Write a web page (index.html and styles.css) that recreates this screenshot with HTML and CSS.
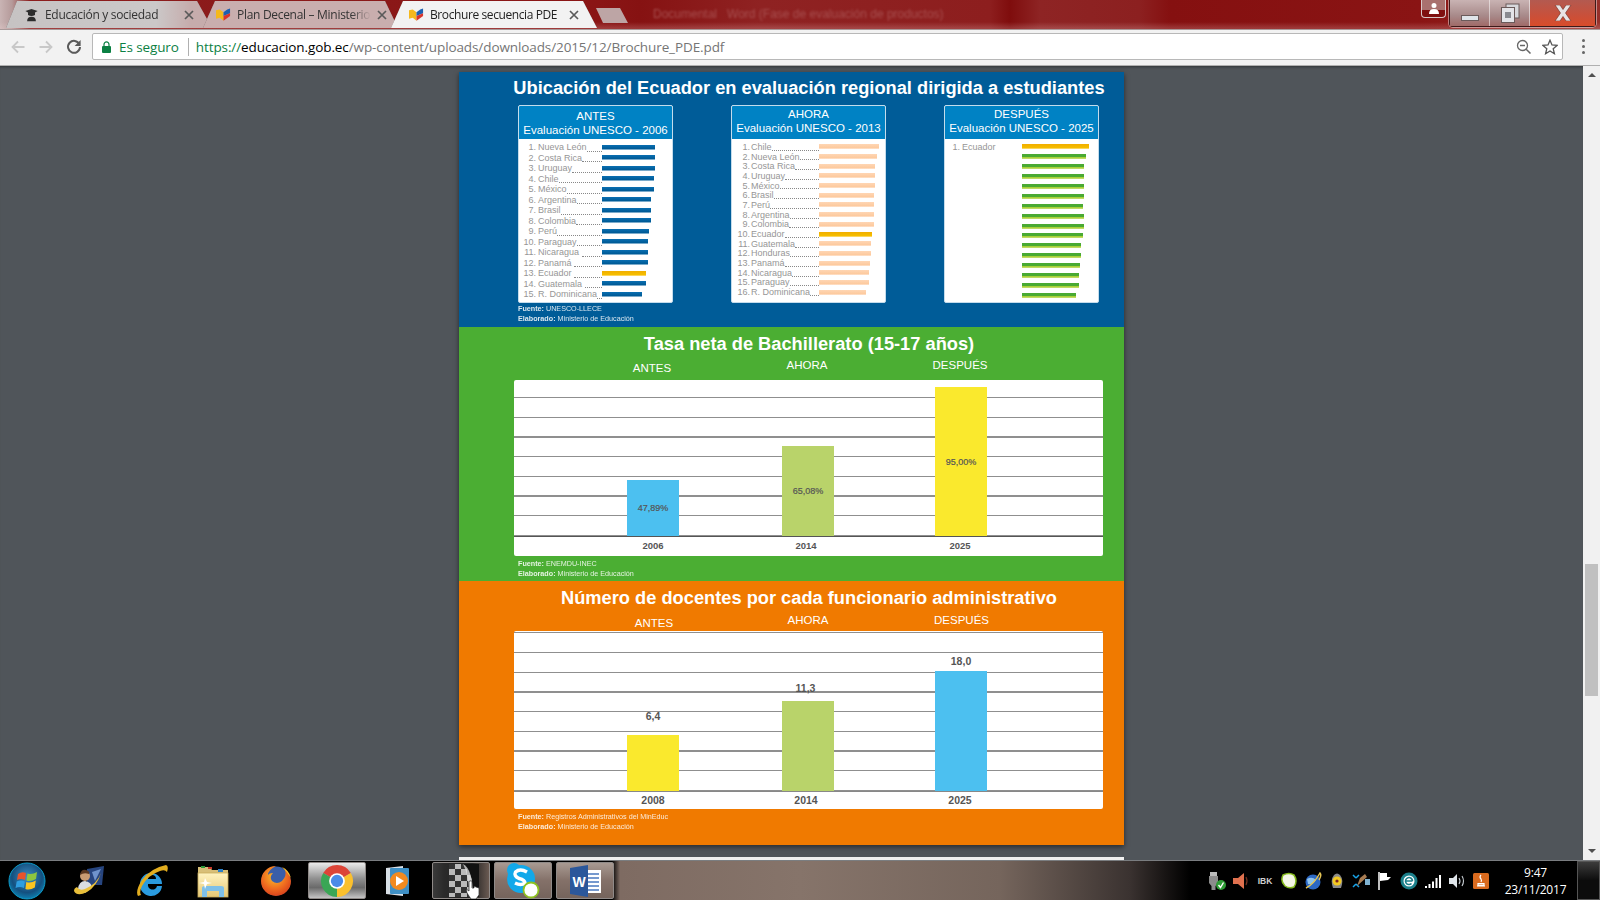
FILE: index.html
```html
<!DOCTYPE html>
<html lang="es">
<head>
    <meta charset="UTF-8">
    <title>Brochure secuencia PDE</title>
    <link rel="stylesheet" href="styles.css">
</head>
<body>
    <svg class="defs" width="0" height="0">
        <defs>
            <symbol id="book" viewBox="0 0 16 14">
                <path d="M0 2 L4 1 L8 4 L8 13 L4 10 L0 11 Z" fill="#f5b81c"/>
                <path d="M8 4 L12 1 L15 0 L15 5 L8 8 Z" fill="#1d5fb0"/>
                <path d="M8 8 L15 5 L15 8 L8 13 Z" fill="#d8342c"/>
            </symbol>
            <symbol id="close" viewBox="0 0 10 10">
                <path d="M1 1 L9 9 M9 1 L1 9" stroke="#5a5a5a" stroke-width="1.7" fill="none"/>
            </symbol>
            <radialGradient id="orb" cx="50%" cy="40%" r="60%">
                <stop offset="0" stop-color="#3f8fc4"/>
                <stop offset="0.7" stop-color="#14507f"/>
                <stop offset="1" stop-color="#0f7fb0"/>
            </radialGradient>
            <linearGradient id="folder" x1="0" y1="0" x2="0" y2="1">
                <stop offset="0" stop-color="#fff3c0"/>
                <stop offset="1" stop-color="#e6c875"/>
            </linearGradient>
            <radialGradient id="fox" cx="45%" cy="35%" r="70%">
                <stop offset="0" stop-color="#fbbf2a"/>
                <stop offset="0.6" stop-color="#ef6a1f"/>
                <stop offset="1" stop-color="#d43c1b"/>
            </radialGradient>
            <pattern id="checks" width="12" height="12" patternUnits="userSpaceOnUse">
                <rect width="12" height="12" fill="#333"/>
                <rect width="6" height="6" fill="#bbb"/>
                <rect x="6" y="6" width="6" height="6" fill="#bbb"/>
            </pattern>
        </defs>
    </svg>

    <div class="window">
        <header class="titlebar">
            <div class="tabs">
                <div class="tab tab-first">
                    <svg class="tab-icon" viewBox="0 0 14 16"><path d="M0 3.5 L7 1 L14 3.5 L11 5 L11 8 Q7 10 3 8 L3 5 Z M2 15 Q2 10 7 10 Q12 10 12 15 Z" fill="#2c2c2c"/></svg>
                    <span class="tab-title">Educación y sociedad</span>
                    <svg class="tab-close"><use href="#close"/></svg>
                </div>
                <div class="tab tab-second">
                    <svg class="tab-icon"><use href="#book"/></svg>
                    <span class="tab-title tab-fade">Plan Decenal – Ministerio</span>
                    <svg class="tab-close"><use href="#close"/></svg>
                </div>
                <div class="tab tab-active">
                    <svg class="tab-icon"><use href="#book"/></svg>
                    <span class="tab-title">Brochure secuencia PDE</span>
                    <svg class="tab-close"><use href="#close"/></svg>
                </div>
                <div class="tab-new"></div>
            </div>
            <div class="blurred-title">Documental &nbsp; Word (Fase de evaluación de productos)</div>
            <div class="profile">
                <svg viewBox="0 0 10 12" width="10" height="12"><path d="M5 0 A2.4 2.4 0 1 1 5 5 A2.4 2.4 0 1 1 5 0 Z M0 11 Q0 6 5 6 Q10 6 10 11 Z" fill="#fff"/></svg>
            </div>
            <div class="win-controls">
                <div class="win-btn"><span class="win-min"></span></div>
                <div class="win-btn">
                    <svg viewBox="0 0 20 20" width="20" height="20">
                        <rect x="6" y="1" width="13" height="14" fill="#d8d8dc" stroke="#6a5a5a"/>
                        <rect x="1.5" y="4.5" width="13" height="15" fill="#e4e4e8" stroke="#6a5a5a"/>
                        <rect x="5" y="9" width="6" height="6" fill="#8a8a90"/>
                    </svg>
                </div>
                <div class="win-btn win-close">
                    <svg viewBox="0 0 18 16" width="18" height="16"><path d="M1 0 H6 L9 4.5 L12 0 H17 L11.5 8 L17 16 H12 L9 11.5 L6 16 H1 L6.5 8 Z" fill="#e8e4e4" stroke="#6a2a20" stroke-width=".6"/></svg>
                </div>
            </div>
        </header>

        <div class="toolbar">
            <div class="nav-btn"><svg viewBox="0 0 14 14" width="14" height="14"><path d="M7 1.5 L1.5 7 L7 12.5 M1.5 7 H13.5" class="nav-off"/></svg></div>
            <div class="nav-btn"><svg viewBox="0 0 14 14" width="14" height="14"><path d="M7 1.5 L12.5 7 L7 12.5 M12.5 7 H.5" class="nav-off"/></svg></div>
            <div class="nav-btn"><svg viewBox="0 0 16 16" width="16" height="16"><path d="M13.4 5.2 A6 6 0 1 0 14 8" fill="none" stroke="#5a5a5a" stroke-width="2"/><path d="M14.6 1 V7 H8.6 Z" fill="#5a5a5a"/></svg></div>
            <div class="omnibox">
                <svg class="lock" viewBox="0 0 9 12" width="9" height="12"><path d="M2 5 V3.4 A2.5 2.5 0 0 1 7 3.4 V5" fill="none" stroke="#0b8043" stroke-width="1.2"/><rect y="5" width="9" height="7" rx="1" fill="#0b8043"/></svg>
                <span class="secure">Es seguro</span>
                <span class="omni-sep"></span>
                <span class="url"><span class="url-scheme">https://</span><span class="url-host">educacion.gob.ec</span>/wp-content/uploads/downloads/2015/12/Brochure_PDE.pdf</span>
                <svg class="omni-icon" viewBox="0 0 16 16" width="16" height="16"><circle cx="6.5" cy="6.5" r="5" fill="none" stroke="#666" stroke-width="1.3"/><path d="M4 6.5 H9 M10.2 10.2 L14.5 14.5" stroke="#666" stroke-width="1.5"/></svg>
                <svg class="omni-icon" viewBox="0 0 16 16" width="16" height="16"><path d="M8 1.2 L10 6 L15 6.4 L11.2 9.7 L12.4 14.7 L8 12 L3.6 14.7 L4.8 9.7 L1 6.4 L6 6 Z" fill="none" stroke="#555" stroke-width="1.3"/></svg>
            </div>
            <div class="menu-dots"><span></span><span></span><span></span></div>
        </div>

        <main class="viewer">
            <div class="pages">
                <div class="doc">
                    <section class="band band-blue">
                        <h2 class="band-title">Ubicación del Ecuador en evaluación regional dirigida a estudiantes</h2>
                        <div class="rank-cards">
                            <div class="rank-card rank-low">
                                <div class="rank-head rank-head-tall">ANTES<br>Evaluación UNESCO - 2006</div>
                                <div class="rank-rows rows-a">
                                    <div class="rank-row"><span class="num">1.</span><span class="name">Nueva León</span><i class="dots"></i><span class="bar-box"><b class="bar bar-blue" style="width:53px"></b></span></div>
                                    <div class="rank-row"><span class="num">2.</span><span class="name">Costa Rica</span><i class="dots"></i><span class="bar-box"><b class="bar bar-blue" style="width:53px"></b></span></div>
                                    <div class="rank-row"><span class="num">3.</span><span class="name">Uruguay</span><i class="dots"></i><span class="bar-box"><b class="bar bar-blue" style="width:53px"></b></span></div>
                                    <div class="rank-row"><span class="num">4.</span><span class="name">Chile</span><i class="dots"></i><span class="bar-box"><b class="bar bar-blue" style="width:52px"></b></span></div>
                                    <div class="rank-row"><span class="num">5.</span><span class="name">México</span><i class="dots"></i><span class="bar-box"><b class="bar bar-blue" style="width:52px"></b></span></div>
                                    <div class="rank-row"><span class="num">6.</span><span class="name">Argentina</span><i class="dots"></i><span class="bar-box"><b class="bar bar-blue" style="width:49px"></b></span></div>
                                    <div class="rank-row"><span class="num">7.</span><span class="name">Brasil</span><i class="dots"></i><span class="bar-box"><b class="bar bar-blue" style="width:49px"></b></span></div>
                                    <div class="rank-row"><span class="num">8.</span><span class="name">Colombia</span><i class="dots"></i><span class="bar-box"><b class="bar bar-blue" style="width:49px"></b></span></div>
                                    <div class="rank-row"><span class="num">9.</span><span class="name">Perú</span><i class="dots"></i><span class="bar-box"><b class="bar bar-blue" style="width:47px"></b></span></div>
                                    <div class="rank-row"><span class="num">10.</span><span class="name">Paraguay</span><i class="dots"></i><span class="bar-box"><b class="bar bar-blue" style="width:46px"></b></span></div>
                                    <div class="rank-row"><span class="num">11.</span><span class="name">Nicaragua&nbsp;</span><i class="dots"></i><span class="bar-box"><b class="bar bar-blue" style="width:46px"></b></span></div>
                                    <div class="rank-row"><span class="num">12.</span><span class="name">Panamá&nbsp;</span><i class="dots"></i><span class="bar-box"><b class="bar bar-blue" style="width:46px"></b></span></div>
                                    <div class="rank-row"><span class="num">13.</span><span class="name">Ecuador&nbsp;</span><i class="dots"></i><span class="bar-box"><b class="bar bar-gold" style="width:44px"></b></span></div>
                                    <div class="rank-row"><span class="num">14.</span><span class="name">Guatemala&nbsp;</span><i class="dots"></i><span class="bar-box"><b class="bar bar-blue" style="width:44px"></b></span></div>
                                    <div class="rank-row"><span class="num">15.</span><span class="name">R. Dominicana</span><i class="dots"></i><span class="bar-box"><b class="bar bar-blue" style="width:40px"></b></span></div>
                                </div>
                            </div>
                            <div class="rank-card rank-mid">
                                <div class="rank-head">AHORA<br>Evaluación UNESCO - 2013</div>
                                <div class="rank-rows rows-b">
                                    <div class="rank-row"><span class="num">1.</span><span class="name">Chile</span><i class="dots"></i><span class="bar-box"><b class="bar bar-peach" style="width:60px"></b></span></div>
                                    <div class="rank-row"><span class="num">2.</span><span class="name">Nueva León</span><i class="dots"></i><span class="bar-box"><b class="bar bar-peach" style="width:58px"></b></span></div>
                                    <div class="rank-row"><span class="num">3.</span><span class="name">Costa Rica</span><i class="dots"></i><span class="bar-box"><b class="bar bar-peach" style="width:56px"></b></span></div>
                                    <div class="rank-row"><span class="num">4.</span><span class="name">Uruguay</span><i class="dots"></i><span class="bar-box"><b class="bar bar-peach" style="width:56px"></b></span></div>
                                    <div class="rank-row"><span class="num">5.</span><span class="name">México</span><i class="dots"></i><span class="bar-box"><b class="bar bar-peach" style="width:56px"></b></span></div>
                                    <div class="rank-row"><span class="num">6.</span><span class="name">Brasil</span><i class="dots"></i><span class="bar-box"><b class="bar bar-peach" style="width:55px"></b></span></div>
                                    <div class="rank-row"><span class="num">7.</span><span class="name">Perú</span><i class="dots"></i><span class="bar-box"><b class="bar bar-peach" style="width:55px"></b></span></div>
                                    <div class="rank-row"><span class="num">8.</span><span class="name">Argentina</span><i class="dots"></i><span class="bar-box"><b class="bar bar-peach" style="width:55px"></b></span></div>
                                    <div class="rank-row"><span class="num">9.</span><span class="name">Colombia</span><i class="dots"></i><span class="bar-box"><b class="bar bar-peach" style="width:55px"></b></span></div>
                                    <div class="rank-row"><span class="num">10.</span><span class="name">Ecuador</span><i class="dots"></i><span class="bar-box"><b class="bar bar-gold" style="width:53px"></b></span></div>
                                    <div class="rank-row"><span class="num">11.</span><span class="name">Guatemala</span><i class="dots"></i><span class="bar-box"><b class="bar bar-peach" style="width:52px"></b></span></div>
                                    <div class="rank-row"><span class="num">12.</span><span class="name">Honduras</span><i class="dots"></i><span class="bar-box"><b class="bar bar-peach" style="width:52px"></b></span></div>
                                    <div class="rank-row"><span class="num">13.</span><span class="name">Panamá</span><i class="dots"></i><span class="bar-box"><b class="bar bar-peach" style="width:51px"></b></span></div>
                                    <div class="rank-row"><span class="num">14.</span><span class="name">Nicaragua</span><i class="dots"></i><span class="bar-box"><b class="bar bar-peach" style="width:50px"></b></span></div>
                                    <div class="rank-row"><span class="num">15.</span><span class="name">Paraguay</span><i class="dots"></i><span class="bar-box"><b class="bar bar-peach" style="width:50px"></b></span></div>
                                    <div class="rank-row"><span class="num">16.</span><span class="name">R. Dominicana</span><i class="dots"></i><span class="bar-box"><b class="bar bar-peach" style="width:47px"></b></span></div>
                                </div>
                            </div>
                            <div class="rank-card rank-high">
                                <div class="rank-head">DESPUÉS<br>Evaluación UNESCO - 2025</div>
                                <div class="rank-rows rows-c">
                                    <div class="rank-row"><span class="num">1.</span><span class="name">Ecuador</span><i class="no-dots"></i><span class="bar-box"><b class="bar bar-gold" style="width:67px"></b></span></div>
                                    <div class="rank-row"><i class="no-dots"></i><span class="bar-box"><b class="bar bar-green" style="width:64px"></b></span></div>
                                    <div class="rank-row"><i class="no-dots"></i><span class="bar-box"><b class="bar bar-green" style="width:62px"></b></span></div>
                                    <div class="rank-row"><i class="no-dots"></i><span class="bar-box"><b class="bar bar-green" style="width:62px"></b></span></div>
                                    <div class="rank-row"><i class="no-dots"></i><span class="bar-box"><b class="bar bar-green" style="width:62px"></b></span></div>
                                    <div class="rank-row"><i class="no-dots"></i><span class="bar-box"><b class="bar bar-green" style="width:62px"></b></span></div>
                                    <div class="rank-row"><i class="no-dots"></i><span class="bar-box"><b class="bar bar-green" style="width:61px"></b></span></div>
                                    <div class="rank-row"><i class="no-dots"></i><span class="bar-box"><b class="bar bar-green" style="width:62px"></b></span></div>
                                    <div class="rank-row"><i class="no-dots"></i><span class="bar-box"><b class="bar bar-green" style="width:62px"></b></span></div>
                                    <div class="rank-row"><i class="no-dots"></i><span class="bar-box"><b class="bar bar-green" style="width:61px"></b></span></div>
                                    <div class="rank-row"><i class="no-dots"></i><span class="bar-box"><b class="bar bar-green" style="width:59px"></b></span></div>
                                    <div class="rank-row"><i class="no-dots"></i><span class="bar-box"><b class="bar bar-green" style="width:59px"></b></span></div>
                                    <div class="rank-row"><i class="no-dots"></i><span class="bar-box"><b class="bar bar-green" style="width:58px"></b></span></div>
                                    <div class="rank-row"><i class="no-dots"></i><span class="bar-box"><b class="bar bar-green" style="width:57px"></b></span></div>
                                    <div class="rank-row"><i class="no-dots"></i><span class="bar-box"><b class="bar bar-green" style="width:57px"></b></span></div>
                                    <div class="rank-row"><i class="no-dots"></i><span class="bar-box"><b class="bar bar-green" style="width:54px"></b></span></div>
                                </div>
                            </div>
                        </div>
                        <div class="notes notes-blue">
                            <p><b>Fuente:</b> UNESCO-LLECE</p>
                            <p><b>Elaborado:</b> Ministerio de Educación</p>
                        </div>
                    </section>

                    <section class="band band-green">
                        <h2 class="band-title">Tasa neta de Bachillerato (15-17 años)</h2>
                        <div class="periods periods-green">
                            <span class="period-low">ANTES</span><span>AHORA</span><span>DESPUÉS</span>
                        </div>
                        <div class="chart">
                            <div class="plot plot-green">
                                <div class="col"><div class="col-bar fill-sky" style="height:56px">47,89%</div></div>
                                <div class="col"><div class="col-bar fill-olive" style="height:90px">65,08%</div></div>
                                <div class="col"><div class="col-bar fill-yellow" style="height:149px">95,00%</div></div>
                            </div>
                            <div class="years years-green"><span>2006</span><span>2014</span><span>2025</span></div>
                        </div>
                        <div class="notes notes-green">
                            <p><b>Fuente:</b> ENEMDU-INEC</p>
                            <p><b>Elaborado:</b> Ministerio de Educación</p>
                        </div>
                    </section>

                    <section class="band band-orange">
                        <h2 class="band-title">Número de docentes por cada funcionario administrativo</h2>
                        <div class="periods periods-orange">
                            <span class="period-low">ANTES</span><span>AHORA</span><span>DESPUÉS</span>
                        </div>
                        <div class="chart">
                            <div class="plot plot-orange">
                                <div class="col"><span class="col-val val-far">6,4</span><div class="col-bar fill-yellow" style="height:56px"></div></div>
                                <div class="col"><span class="col-val val-mid">11,3</span><div class="col-bar fill-olive" style="height:90px"></div></div>
                                <div class="col"><span class="col-val val-near">18,0</span><div class="col-bar fill-sky" style="height:120px"></div></div>
                            </div>
                            <div class="years years-orange"><span>2008</span><span>2014</span><span>2025</span></div>
                        </div>
                        <div class="notes notes-orange">
                            <p><b>Fuente:</b> Registros Administrativos del MinEduc</p>
                            <p><b>Elaborado:</b> Ministerio de Educación</p>
                        </div>
                    </section>
                </div>
                <div class="next-page"></div>
            </div>
            <div class="scrollbar">
                <div class="arrow-up"></div>
                <div class="track"><div class="thumb"></div></div>
                <div class="arrow-down"></div>
            </div>
        </main>

        <footer class="taskbar">
            <div class="start">
                <svg viewBox="0 0 38 38" width="38" height="38">
                    <circle cx="19" cy="19" r="18" fill="url(#orb)" stroke="#0c9ac8" stroke-width="1"/>
                    <path d="M10 12 Q14 9 18 11 L17 18 Q13 16 9 18 Z" fill="#e8532b"/>
                    <path d="M19.5 11.5 Q24 13 29 10 L28 17 Q23 20 18.5 18.5 Z" fill="#8dc63f"/>
                    <path d="M8.7 19.5 Q13 17.5 16.8 19.5 L16 26 Q12 24 7.5 26 Z" fill="#2f9ee0"/>
                    <path d="M18.3 20 Q23 21.5 27.8 18.5 L26.8 25.5 Q22 28.5 17.4 27 Z" fill="#fcc51f"/>
                </svg>
            </div>
            <div class="task-app app-one">
                <svg viewBox="0 0 32 32" width="32" height="32">
                    <path d="M14 4 L31 1 L29 20 L14 20 Z" fill="#27457f"/>
                    <path d="M19 7 L28 4 L22 16 Z" fill="#6f93cc"/>
                    <circle cx="12" cy="11" r="5" fill="#c99a72"/>
                    <path d="M7 10 Q8 4 13 5 Q17 6 16 9 Q11 7 7 10 Z" fill="#5a3620"/>
                    <path d="M5 24 Q6 16 12 16 Q18 17 19 22 L12 28 Z" fill="#d9dde2"/>
                    <path d="M1 26 Q4 32 14 27 Q24 21 28 8 Q24 19 12 24 Q6 26 4 22 Q1 23 1 26 Z" fill="#e9bf3a"/>
                </svg>
            </div>
            <div class="task-app app-two">
                <svg viewBox="0 0 32 34" width="32" height="34">
                    <path d="M4 20 A11 11 0 1 1 26 20 L12 20 A4 4 0 0 0 21 22 H26 A11 11 0 0 1 4 20 Z M12 15 H20 A4 4 0 0 0 12 15 Z" fill="#2a9be0" fill-rule="evenodd"/>
                    <path d="M2 32 Q-1 27 6 16 Q15 4 30 1 Q33 2 31 8 Q29 5 24 7 Q12 11 6 22 Q3 28 5 31 Z" fill="#e2ad1f"/>
                </svg>
            </div>
            <div class="task-app app-three">
                <svg viewBox="0 0 34 34" width="34" height="34">
                    <path d="M2 3 H14 L16 6 H32 V13 H2 Z" fill="#d8bf78"/>
                    <rect x="5" y="2" width="4" height="2" fill="#2f9a3a"/>
                    <rect x="12" y="3" width="4" height="2" fill="#c8392b"/>
                    <rect x="22" y="5" width="5" height="3" fill="#2b80c8"/>
                    <rect x="2" y="9" width="30" height="24" fill="url(#folder)" stroke="#c9ac5c" stroke-width=".8"/>
                    <path d="M6 33 V24 Q6 22 9 22 H25 Q28 22 28 24 V33 H23 V27 H11 V33 Z" fill="#7fc0e8"/>
                    <path d="M9 14 L11 18 L16 19 L11 20 L9 25 L8 20 L3 19 L8 18 Z" fill="#fff"/>
                </svg>
            </div>
            <div class="task-app app-four">
                <svg viewBox="0 0 32 34" width="32" height="34">
                    <circle cx="16" cy="17" r="14.5" fill="#3a5ea8"/>
                    <path d="M16 2 A15 15 0 1 0 31 17 Q30 9 25 6 Q27 12 22 17 Q17 21 12 17 Q9 13 13 9 Q9 9 8 11 Q8 6 16 2 Z" fill="url(#fox)"/>
                    <path d="M22 3 Q29 6 31 14 Q27 8 22 3 Z" fill="#fbbf2a"/>
                </svg>
            </div>
            <div class="task-btn task-chrome">
                <svg viewBox="0 0 32 32" width="34" height="34">
                    <path d="M16 16 L3 8.5 A15 15 0 0 1 29 8.5 Z" fill="#dc4437"/>
                    <path d="M16 16 L29 8.5 A15 15 0 0 1 16 31 Z" fill="#fbc02d"/>
                    <path d="M16 16 L16 31 A15 15 0 0 1 3 8.5 Z" fill="#3aa655"/>
                    <circle cx="16" cy="16" r="7.4" fill="#fff"/>
                    <circle cx="16" cy="16" r="5.8" fill="#4a8be8"/>
                </svg>
            </div>
            <div class="task-app app-media">
                <svg viewBox="0 0 26 32" width="26" height="32">
                    <path d="M1 3 L18 1 V31 L1 29 Z" fill="#d8dfe6"/>
                    <rect x="5" y="3" width="19" height="26" rx="1" fill="#3f8fc4"/>
                    <circle cx="14" cy="16" r="9" fill="#f28a1f"/>
                    <path d="M11 11 L19 16 L11 21 Z" fill="#fff"/>
                </svg>
            </div>
            <div class="task-btn task-checks">
                <svg viewBox="0 0 36 36" width="36" height="36">
                    <rect x="6" y="1" width="30" height="33" fill="url(#checks)"/>
                    <path d="M20 1 H36 V34 H30 Q32 14 20 1 Z" fill="#111"/>
                    <path d="M20 1 Q30 6 30 34 H26 Q26 12 20 1 Z" fill="#ddd" opacity=".75"/>
                    <path d="M27 18 Q29 17 29 19 V25 L31 25 V23 L33 24 L36 25 V32 L33 36 H28 L24 30 L23 26 L26 28 V19 Q26 18 27 18 Z" fill="#fff" stroke="#222" stroke-width=".7"/>
                </svg>
            </div>
            <div class="task-btn task-skype">
                <svg viewBox="0 0 34 36" width="34" height="36">
                    <circle cx="15" cy="16" r="14" fill="#12a9ea"/>
                    <circle cx="8" cy="7" r="7" fill="#12a9ea"/>
                    <path d="M21 9 Q14 5 9.5 9 Q7.5 13 13 15.5 Q19 17 19 20 Q15 23 9 20" fill="none" stroke="#fff" stroke-width="3.4"/>
                    <circle cx="25" cy="27" r="7.5" fill="#fff" stroke="#8dc21f" stroke-width="1.8"/>
                </svg>
            </div>
            <div class="task-btn task-word">
                <svg viewBox="0 0 34 34" width="34" height="34">
                    <rect x="14" y="6" width="19" height="23" fill="#fff"/>
                    <path d="M16 10 H31 M16 14 H31 M16 18 H31 M16 22 H31 M16 26 H31" stroke="#4a78bf" stroke-width="1.5"/>
                    <path d="M2 4 L20 1 V33 L2 30 Z" fill="#2b579a"/>
                    <text x="4.5" y="23" class="word-letter">W</text>
                </svg>
            </div>
            <div class="task-gap"></div>
            <div class="tray">
                <div class="tray-icon"><svg viewBox="0 0 18 18" width="18" height="18"><rect x="2" y="0" width="7" height="4" fill="#bbb"/><path d="M1 4 H10 V11 L7.5 14 V18 H3.5 V14 L1 11 Z" fill="#8c8c8c"/><circle cx="13" cy="13" r="5" fill="#2e9c35"/><path d="M10.5 13 L12.5 15.5 L15.5 10.5" fill="none" stroke="#fff" stroke-width="1.4"/></svg></div>
                <div class="tray-icon"><svg viewBox="0 0 18 18" width="18" height="18"><path d="M1 6 H6 L12 1 V17 L6 12 H1 Z" fill="#e0714f"/><path d="M14 5 Q16 9 14 13" fill="none" stroke="#6e3020" stroke-width="1.2"/></svg></div>
                <div class="tray-icon tray-text">IBK</div>
                <div class="tray-icon"><svg viewBox="0 0 18 18" width="18" height="18"><path d="M3 3 Q9 0 14 3 Q18 9 14 15 Q9 17 5 14 Q0 9 3 3 Z" fill="#f4f6e6" stroke="#83b81a" stroke-width="1.5"/></svg></div>
                <div class="tray-icon"><svg viewBox="0 0 18 18" width="18" height="18"><circle cx="9" cy="10" r="7.5" fill="#2c68c4"/><path d="M3 7 Q8 4 12 8 Q9 13 4 12 Z" fill="#8fc4ee"/><path d="M2 16 Q10 12 16 1 Q18 3 15 8" fill="none" stroke="#e3c354" stroke-width="1.5"/></svg></div>
                <div class="tray-icon"><svg viewBox="0 0 18 18" width="18" height="18"><path d="M5 16 Q2 8 6 3 Q9 0 12 3 Q16 8 13 16 Z" fill="#8a8a8a"/><circle cx="9" cy="9" r="4.5" fill="#f3c921"/><circle cx="9" cy="9" r="1.6" fill="#7a2222"/></svg></div>
                <div class="tray-icon"><svg viewBox="0 0 18 18" width="18" height="18"><path d="M1 3 L4 6 M1 15 L4 12 M7 15 L4 12 M7 3 L4 6" stroke="#18a3e8" stroke-width="1.5"/><path d="M5 14 L15 5 L13 2 L8 6 Z" fill="#a87c52"/><rect x="13" y="7" width="5" height="6" fill="#7fb2d0"/></svg></div>
                <div class="tray-icon"><svg viewBox="0 0 18 18" width="18" height="18"><path d="M3 0 V18" stroke="#fff" stroke-width="1.5"/><path d="M4 1 H11 V5 L15 5 L12 8 L4 9 Z" fill="#fff"/></svg></div>
                <div class="tray-icon"><svg viewBox="0 0 18 18" width="18" height="18"><circle cx="9" cy="9" r="8.5" fill="#1b7f8a"/><circle cx="9" cy="9" r="5.5" fill="#fff"/><path d="M5.5 9 H12.5 M12.5 9 A3.5 3.5 0 1 0 11.5 11.5" fill="none" stroke="#1b7f8a" stroke-width="1.6"/></svg></div>
                <div class="tray-icon"><svg viewBox="0 0 16 14" width="16" height="14"><path d="M0 12 H2 V14 H0 Z M3.5 10 H5.5 V14 H3.5 Z M7 7.5 H9 V14 H7 Z M10.5 4 H12.5 V14 H10.5 Z M14 1 H16 V14 H14 Z" fill="#fff"/></svg></div>
                <div class="tray-icon"><svg viewBox="0 0 18 18" width="18" height="18"><path d="M1 6 H5 L9 2 V16 L5 12 H1 Z" fill="#dfe5ea"/><path d="M11 6 Q13 9 11 12 M14 4 Q17 9 14 14" fill="none" stroke="#c8ced4" stroke-width="1.1"/></svg></div>
                <div class="tray-icon"><svg viewBox="0 0 18 18" width="18" height="18"><rect width="16" height="16" x="1" y="1" rx="1.5" fill="#d96a1e"/><path d="M5 14 H13 M6 11.5 H12 V13 H6 Z M9 3 Q7 5 9 7 Q10 8.5 9 10" fill="none" stroke="#fff" stroke-width="1.2"/></svg></div>
            </div>
            <div class="clock"><div>9:47</div><div>23/11/2017</div></div>
            <div class="show-desktop"></div>
        </footer>
    </div>
</body>
</html>
```

FILE: styles.css
```css
* {
    margin: 0;
    padding: 0;
    box-sizing: border-box;
}

html, body {
    width: 1600px;
    height: 900px;
    overflow: hidden;
}

body {
    font-family: "Liberation Sans", Arial, sans-serif;
}

.defs {
    position: absolute;
}

.window {
    display: flex;
    flex-direction: column;
    width: 1600px;
    height: 900px;
}

/* title bar and tabs */
.titlebar {
    display: flex;
    align-items: flex-start;
    height: 29px;
    flex: none;
    padding-left: 6px;
    background:
        linear-gradient(180deg, rgba(255,255,255,0) 0, rgba(255,255,255,0) 22px, rgba(255,225,225,.18) 28px),
        linear-gradient(90deg, #c9b4b4 0, #b59a9a 12px, #8c1d1d 30px, #8a1515 600px, #861212 640px, #8f2222 760px, #8d1e1e 990px, #7f0d0d 1010px, #8e2424 1040px, #8c2020 1140px, #851010 1170px, #8a1414 1420px, #96302a 1600px);
}

.tabs {
    display: flex;
    align-items: flex-end;
    height: 28px;
    width: 628px;
    flex: none;
}

.tab {
    position: relative;
    isolation: isolate;
    display: flex;
    align-items: center;
    height: 27px;
    margin-top: 1px;
    font-family: "Open Sans", sans-serif;
    font-size: 12px;
    letter-spacing: -0.3px;
    color: #333;
    filter: drop-shadow(0 0 .6px #6a5a5a);
}

.tab::before {
    content: "";
    position: absolute;
    inset: 0;
    z-index: -1;
}

.tab-first {
    width: 206px;
    padding-left: 18px;
    z-index: 1;
}

.tab-first::before {
    clip-path: polygon(0 100%, 11px 0, 191px 0, 100% 100%);
    background: linear-gradient(90deg, #c6c3c3 0, #cbc8c8 150px, #c6acac 185px);
}

.tab-second {
    width: 195px;
    margin-left: -9px;
    padding-left: 13px;
    z-index: 2;
}

.tab-second::before {
    clip-path: polygon(0 100%, 12px 0, 182px 0, 100% 100%);
    background: #c9aeae;
}

.tab-active {
    width: 206px;
    margin-left: -7px;
    padding-left: 18px;
    z-index: 3;
    color: #222;
    letter-spacing: -0.4px;
}

.tab-active::before {
    clip-path: polygon(0 100%, 12px 0, 192px 0, 100% 100%);
    background: #f2f2f2;
}

.tab-icon {
    width: 15px;
    height: 14px;
    flex: none;
    margin-right: 6px;
}

.tab-title {
    flex: 1;
    min-width: 0;
    white-space: nowrap;
}

.tab-fade {
    -webkit-mask-image: linear-gradient(90deg, #000 85%, transparent 100%);
    mask-image: linear-gradient(90deg, #000 85%, transparent 100%);
}

.tab-close {
    width: 10px;
    height: 10px;
    flex: none;
    margin: 0 18px 0 6px;
}

.tab-second .tab-close {
    margin-right: 11px;
}

.tab-new {
    width: 32px;
    height: 15px;
    margin: 0 0 5px -1px;
    background: #bda5a5;
    clip-path: polygon(7px 100%, 0 0, 24px 0, 100% 100%);
}

.blurred-title {
    flex: 1;
    padding: 7px 0 0 19px;
    color: #a85050;
    font-size: 12px;
    white-space: nowrap;
    filter: blur(1.2px);
}

.profile {
    display: flex;
    justify-content: center;
    padding-top: 3px;
    width: 25px;
    height: 18px;
    margin-right: 3px;
    background: linear-gradient(180deg, #a9716f 0, #a9716f 10px, #7f1010 10px);
    border: 1px solid #d8c8c8;
    border-top: 0;
    border-radius: 0 0 4px 4px;
}

.win-controls {
    display: flex;
    height: 27px;
    margin-right: 4px;
    border: 1px solid #3c1a1a;
    border-top: 0;
    border-radius: 0 0 4px 4px;
    box-shadow: 0 0 0 1px rgba(255,255,255,.45);
}

.win-btn {
    display: flex;
    align-items: center;
    justify-content: center;
    width: 40px;
    border-right: 1px solid rgba(255,255,255,.5);
    background: linear-gradient(180deg, #c9b3b3, #a88a8a 60%, #a06a68);
}

.win-close {
    width: 65px;
    border-right: 0;
    background: linear-gradient(180deg, #b35a50, #c9503a 60%, #d94c2a);
}

.win-min {
    display: block;
    width: 18px;
    height: 6px;
    margin-top: 10px;
    background: #dfe3e8;
    border: 1px solid #6a5a5a;
}

/* toolbar */
.toolbar {
    display: flex;
    align-items: center;
    height: 37px;
    flex: none;
    padding: 0 0 2px 4px;
    background: #f2f2f2;
    border-top: 1px solid #a89a9a;
    border-bottom: 1px solid #b0b0b0;
}

.nav-btn {
    display: flex;
    align-items: center;
    justify-content: center;
    width: 28px;
}

.nav-off {
    fill: none;
    stroke: #c8c8c8;
    stroke-width: 1.8;
}

.omnibox {
    display: flex;
    align-items: center;
    flex: 1;
    height: 27px;
    margin-left: 4px;
    padding: 0 4px 0 9px;
    background: #fff;
    border: 1px solid #b8b8b8;
    border-radius: 2px;
    font-family: "Open Sans", sans-serif;
    font-size: 13.5px;
    letter-spacing: -0.1px;
    color: #757575;
}

.secure {
    margin-left: 8px;
    color: #0b8043;
}

.omni-sep {
    width: 1px;
    height: 18px;
    margin: 0 7px 0 9px;
    background: #b0b0b0;
}

.url {
    flex: 1;
}

.url-scheme {
    color: #0b8043;
}

.url-host {
    color: #000;
}

.omni-icon {
    margin-left: 10px;
}

.menu-dots {
    display: flex;
    flex-direction: column;
    align-items: center;
    gap: 3px;
    width: 37px;
    padding-left: 3px;
}

.menu-dots span {
    width: 3px;
    height: 3px;
    background: #666;
    border-radius: 50%;
}

/* pdf viewer */
.viewer {
    display: flex;
    flex: 1;
    min-height: 0;
    background: #50555a;
}

.pages {
    flex: 1;
    display: flex;
    flex-direction: column;
    align-items: center;
    padding-top: 6px;
    overflow: hidden;
    box-shadow: inset 0 3px 3px -2px rgba(0,0,0,.4);
}

.doc {
    width: 665px;
    flex: none;
    box-shadow: 0 2px 5px rgba(0,0,0,.5);
}

.next-page {
    width: 665px;
    flex: 1;
    margin-top: 12px;
    background: #f0f0f0;
}

.band {
    color: #fff;
    overflow: hidden;
}

.band-blue {
    height: 254.5px;
    padding-top: 4px;
    background: #005c98;
}

.band-green {
    height: 254.5px;
    padding-top: 5px;
    background: #4bae33;
}

.band-orange {
    height: 264px;
    padding-top: 5px;
    background: #f07a00;
}

.band-title {
    padding-left: 35px;
    font-size: 18.25px;
    line-height: 24px;
    font-weight: bold;
    text-align: center;
}

/* ranking cards */
.rank-cards {
    display: flex;
    gap: 58px;
    margin: 5px 0 0 59px;
}

.rank-card {
    width: 155px;
    height: 198px;
    background: #fff;
    border: 1px solid #c4dcec;
    border-radius: 2px;
    overflow: hidden;
}

.rank-head {
    height: 33px;
    padding-top: 1px;
    background: #0082c4;
    font-size: 11.5px;
    line-height: 14px;
    text-align: center;
}

.rank-head-tall {
    padding-top: 3px;
}

.rank-rows {
    display: grid;
    padding-top: 3px;
    font-size: 9px;
    color: #969696;
}

.rows-a {
    grid-auto-rows: 10.5px;
}

.rows-b {
    grid-auto-rows: 9.7px;
}

.rows-c {
    grid-auto-rows: 9.9px;
}

.rank-row {
    display: flex;
    align-items: center;
    white-space: nowrap;
}

.num {
    flex: none;
    width: 17px;
    margin-right: 2px;
    text-align: right;
}

.rank-mid .num {
    width: 18px;
    margin-right: 1px;
}

.rank-high .num {
    width: 15px;
    margin-right: 2px;
}

.dots {
    flex: 1;
    align-self: flex-end;
    height: 3px;
    margin-bottom: 1px;
    border-bottom: 1px dotted #888;
}

.no-dots {
    flex: 1;
}

.bar-box {
    flex: none;
    display: flex;
}

.rank-low .bar-box {
    width: 70.5px;
}

.rank-mid .bar-box {
    width: 66px;
}

.rank-high .bar-box {
    width: 76px;
}

.bar {
    display: block;
    height: 5px;
}

.bar-blue {
    background: linear-gradient(180deg, #0a6fb2 0, #005c98 70%, #b8d2e4 100%);
}

.bar-peach {
    background: linear-gradient(180deg, #ffd6b4 0, #fdcba0 70%, #ffe4cf 100%);
}

.bar-gold {
    background: linear-gradient(180deg, #f1ae00 0, #f5bd00 70%, #ffe28a 100%);
}

.bar-green {
    background: linear-gradient(180deg, #4aaa33 0, #4aaa33 55%, #9cc81c 56%, #c8e07a 100%);
}

/* source notes */
.notes {
    padding: 2px 0 0 59px;
    font-size: 7.2px;
    line-height: 9.7px;
    opacity: .85;
}

.notes-blue {
    margin-top: 1px;
    padding-top: 0;
}

.notes-green, .notes-orange {
    padding-top: 3px;
}

/* column charts */
.periods {
    display: grid;
    justify-items: start;
    height: 16px;
    margin-top: 2px;
    font-size: 11.5px;
    line-height: 14px;
    text-align: center;
}

.periods span {
    width: 80px;
}

.periods-green {
    grid-template-columns: 155px 153px 80px;
    padding-left: 153px;
}

.periods-orange {
    grid-template-columns: 154px 153.5px 80px;
    margin-top: 3px;
    padding-left: 155px;
}

.period-low {
    margin-top: 3px;
}

.chart {
    width: 589px;
    margin: 6.5px 0 0 55px;
    background: #fff;
    border-radius: 2px;
    color: #555;
    font-weight: bold;
}

.band-orange .chart {
    margin-top: 2px;
}

.plot {
    display: grid;
    grid-template-columns: 155px 153px 80px;
    padding-left: 99px;
    border-bottom: 1px solid #555;
    background: repeating-linear-gradient(to top, #8f8f8f 0, #8f8f8f 1.2px, transparent 1.2px, transparent 19.7px);
}

.plot-green {
    height: 157px;
}

.plot-orange {
    height: 161px;
    border-bottom-color: #888;
}

.col {
    display: flex;
    flex-direction: column;
    align-items: center;
    justify-content: flex-end;
    width: 80px;
}

.col-bar {
    display: flex;
    align-items: center;
    justify-content: center;
    width: 52px;
    font-size: 9px;
    font-weight: normal;
    -webkit-text-stroke: .2px #555;
}

.col-val {
    font-size: 10.5px;
    line-height: 12px;
}

.val-far {
    margin-bottom: 13px;
}

.val-mid {
    margin-bottom: 7px;
    margin-right: 5px;
}

.val-near {
    margin-bottom: 4px;
}

.fill-sky {
    background: #4cc0f0;
}

.fill-olive {
    background: #b9d36a;
}

.fill-yellow {
    background: #fae92d;
}

.years {
    display: grid;
    justify-items: start;
    padding-left: 99px;
    text-align: center;
}

.years span {
    width: 80px;
}

.years-green {
    grid-template-columns: 153px 154px 80px;
    height: 19px;
    padding-top: 3px;
    font-size: 9.5px;
    line-height: 12px;
}

.years-orange {
    grid-template-columns: 153px 154px 80px;
    height: 17px;
    padding-top: 2px;
    font-size: 10.5px;
    line-height: 13px;
}

/* scrollbar */
.scrollbar {
    display: flex;
    flex-direction: column;
    width: 17px;
    flex: none;
    background: #f1f1f1;
}

.arrow-up, .arrow-down {
    width: 0;
    height: 0;
    margin: 7px auto;
    border-left: 4px solid transparent;
    border-right: 4px solid transparent;
}

.arrow-up {
    border-bottom: 4px solid #505050;
}

.arrow-down {
    border-top: 4px solid #505050;
}

.track {
    flex: 1;
    padding: 480px 2px 0;
}

.thumb {
    height: 132px;
    background: #c0c0c0;
}

/* taskbar */
.taskbar {
    display: flex;
    align-items: center;
    height: 40px;
    flex: none;
    border-top: 1px solid #7a7d80;
    color: #fff;
    background: linear-gradient(90deg, #000 0, #000 612px, #7e6b62 620px, #86746a 800px, #75655c 1000px, #3a3230 1130px, #000 1190px);
}

.start {
    display: flex;
    width: 58px;
    padding-left: 8px;
}

.task-app {
    display: flex;
    justify-content: center;
    width: 61px;
    flex: none;
}

.app-two, .app-four {
    margin-left: 2px;
}

.task-btn {
    display: flex;
    align-items: center;
    justify-content: center;
    width: 58px;
    height: 37px;
    flex: none;
    border: 1px solid #8f8a88;
    border-radius: 2px;
    background: linear-gradient(180deg, rgba(255,255,255,.42), rgba(255,255,255,.18) 50%, rgba(255,255,255,.3));
}

.task-chrome {
    margin-left: 2px;
    background: linear-gradient(180deg, #eaeaea, #8f8f8f 45%, #6a6a6a 70%, #c4c4c4);
}

.app-media {
    width: 64px;
}

.task-checks {
    margin-left: 2px;
    background: linear-gradient(90deg, #3a3a3a, #2a2a2a 20%, #222 70%, #6a5a52);
}

.task-skype, .task-word {
    margin-left: 4px;
    background: linear-gradient(180deg, #a89a92, #847169 50%, #75645c);
}

.word-letter {
    font-family: "Liberation Sans", sans-serif;
    font-size: 14px;
    font-weight: bold;
    fill: #fff;
}

.task-gap {
    flex: 1;
}

.tray {
    display: flex;
    align-items: center;
    flex: none;
}

.tray-icon {
    display: flex;
    align-items: center;
    justify-content: center;
    width: 24px;
    height: 20px;
}

.tray-text {
    font-size: 8.5px;
    font-weight: bold;
    color: #cfcfcf;
}

.clock {
    width: 83px;
    margin-left: 1px;
    font-family: "Open Sans", sans-serif;
    font-size: 12px;
    line-height: 17px;
    letter-spacing: -0.2px;
    text-align: center;
}

.show-desktop {
    width: 23px;
    height: 39px;
    flex: none;
    border: 1px solid #555;
    background: linear-gradient(180deg, #3c3c3c, #0c0c0c 50%);
}
```
